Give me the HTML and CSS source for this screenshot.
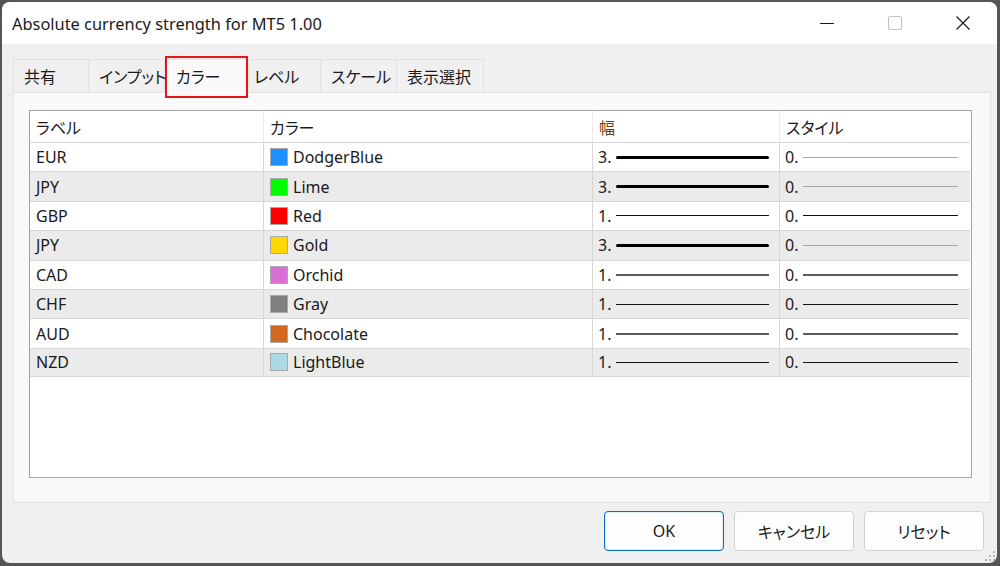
FILE: index.html
```html
<!DOCTYPE html>
<html lang="ja">

<head>
    <meta charset="UTF-8">
    <title>Absolute currency strength for MT5 1.00</title>
    <link rel="stylesheet" href="styles.css">
</head>

<body>
    <div class="window">
        <div class="titlebar">
            <div class="title">Absolute currency strength for MT5 1.00</div>
            <div class="controls">
                <span class="ctl">
                    <svg width="16" height="16" viewBox="0 0 16 16"><path d="M1 8.5h14" stroke="#1a1a1a" stroke-width="1.1"/></svg>
                </span>
                <span class="ctl">
                    <svg width="16" height="16" viewBox="0 0 16 16"><rect x="1.5" y="1.5" width="13" height="13" rx="2" fill="none" stroke="#c4c4c4" stroke-width="1.1"/></svg>
                </span>
                <span class="ctl">
                    <svg width="16" height="16" viewBox="0 0 16 16"><path d="M1.5 1.5l13 13M14.5 1.5l-13 13" stroke="#1a1a1a" stroke-width="1.2"/></svg>
                </span>
            </div>
        </div>

        <div class="content">
            <div class="tabs">
                <div class="tab t-share">共有</div>
                <div class="tab t-input">インプット</div>
                <div class="tab t-color active">カラー</div>
                <div class="tab t-level">レベル</div>
                <div class="tab t-scale">スケール</div>
                <div class="tab t-show">表示選択</div>
            </div>

            <div class="panel">
                <div class="list">
                    <div class="row head">
                        <div class="cell">ラベル</div>
                        <div class="cell">カラー</div>
                        <div class="cell sorted">幅</div>
                        <div class="cell">スタイル</div>
                    </div>
                    <div class="row">
                        <div class="cell">EUR</div>
                        <div class="cell"><span class="swatch" style="background:#1e90ff"></span>DodgerBlue</div>
                        <div class="cell wcell">3.<span class="stroke thick"></span></div>
                        <div class="cell scell">0.<span class="stroke light"></span></div>
                    </div>
                    <div class="row alt">
                        <div class="cell">JPY</div>
                        <div class="cell"><span class="swatch" style="background:#00ff00"></span>Lime</div>
                        <div class="cell wcell">3.<span class="stroke thick"></span></div>
                        <div class="cell scell">0.<span class="stroke light"></span></div>
                    </div>
                    <div class="row">
                        <div class="cell">GBP</div>
                        <div class="cell"><span class="swatch" style="background:#ff0000"></span>Red</div>
                        <div class="cell wcell">1.<span class="stroke thin"></span></div>
                        <div class="cell scell">0.<span class="stroke thin"></span></div>
                    </div>
                    <div class="row alt">
                        <div class="cell">JPY</div>
                        <div class="cell"><span class="swatch" style="background:#ffd700"></span>Gold</div>
                        <div class="cell wcell">3.<span class="stroke thick"></span></div>
                        <div class="cell scell">0.<span class="stroke light"></span></div>
                    </div>
                    <div class="row">
                        <div class="cell">CAD</div>
                        <div class="cell"><span class="swatch" style="background:#da70d6"></span>Orchid</div>
                        <div class="cell wcell">1.<span class="stroke grey"></span></div>
                        <div class="cell scell">0.<span class="stroke grey"></span></div>
                    </div>
                    <div class="row alt">
                        <div class="cell">CHF</div>
                        <div class="cell"><span class="swatch" style="background:#808080"></span>Gray</div>
                        <div class="cell wcell">1.<span class="stroke thin"></span></div>
                        <div class="cell scell">0.<span class="stroke thin"></span></div>
                    </div>
                    <div class="row">
                        <div class="cell">AUD</div>
                        <div class="cell"><span class="swatch" style="background:#d2691e"></span>Chocolate</div>
                        <div class="cell wcell">1.<span class="stroke grey"></span></div>
                        <div class="cell scell">0.<span class="stroke grey"></span></div>
                    </div>
                    <div class="row alt last">
                        <div class="cell">NZD</div>
                        <div class="cell"><span class="swatch" style="background:#add8e6"></span>LightBlue</div>
                        <div class="cell wcell">1.<span class="stroke thin"></span></div>
                        <div class="cell scell">0.<span class="stroke thin"></span></div>
                    </div>
                </div>
            </div>

            <div class="buttons">
                <button class="btn primary">OK</button>
                <button class="btn">キャンセル</button>
                <button class="btn">リセット</button>
            </div>
        </div>

        <svg class="grip" width="12" height="12" viewBox="0 0 12 12">
            <rect x="9" y="1" width="2" height="2" fill="#b5b5b5"/>
            <rect x="5" y="5" width="2" height="2" fill="#b5b5b5"/>
            <rect x="9" y="5" width="2" height="2" fill="#b5b5b5"/>
            <rect x="1" y="9" width="2" height="2" fill="#b5b5b5"/>
            <rect x="5" y="9" width="2" height="2" fill="#b5b5b5"/>
            <rect x="9" y="9" width="2" height="2" fill="#b5b5b5"/>
        </svg>
    </div>
</body>

</html>
```

FILE: styles.css
```css
* {
    box-sizing: border-box;
}

body {
    margin: 0;
    padding: 2px 3px 3px 2px;
    background: #555555;
    font-family: 'Noto Sans', 'Noto Sans CJK JP', sans-serif;
    font-size: 16px;
    color: #1a1a1a;
    height: 566px;
    overflow: hidden;
}

.window {
    position: relative;
    height: 561px;
    background: #f0f0f0;
    border-radius: 8px;
    overflow: hidden;
    display: flex;
    flex-direction: column;
}

/* title bar */
.titlebar {
    height: 42px;
    background: #ffffff;
    display: flex;
    align-items: center;
    justify-content: space-between;
}

.title {
    padding-left: 10px;
    font-size: 16.4px;
    color: #1a1a1a;
}

.controls {
    display: flex;
    height: 100%;
}

.ctl {
    width: 68px;
    display: flex;
    align-items: center;
    justify-content: center;
}

/* body */
.content {
    flex: 1;
    display: flex;
    flex-direction: column;
    padding: 15px 6px 12px 11px;
}

.tabs {
    display: flex;
    height: 33px;
}

.tab {
    height: 33px;
    line-height: 32px;
    padding-left: 10px;
    background: #f0f0f0;
    border: 1px solid #e2e2e2;
    border-left: none;
    border-bottom: none;
    white-space: nowrap;
    font-family: 'Noto Sans CJK JP', sans-serif;
    font-feature-settings: "palt";
}

.t-share {
    width: 76px;
    border-left: 1px solid #e2e2e2;
}

.t-input {
    width: 76px;
}

.t-color {
    width: 84px;
    padding-left: 11px;
}

.t-level {
    width: 72px;
    padding-left: 5px;
}

.t-scale {
    width: 76px;
}

.t-show {
    width: 87px;
}

.tab.active {
    position: relative;
    background: #f9f9f9;
    border-color: #e2e2e2;
    z-index: 1;
    height: 34px;
}

.tab.active::after {
    content: "";
    position: absolute;
    left: 0;
    right: 0;
    top: -4px;
    bottom: -5px;
    border: 2px solid #e8141b;
}

.panel {
    height: 411px;
    background: #f9f9f9;
    border: 1px solid #e2e2e2;
    padding: 17px 18px 24px 15px;
}

/* list view */
.list {
    height: 100%;
    background: #ffffff;
    border: 1px solid #a3a3a3;
}

.row {
    display: grid;
    grid-template-columns: 234px 329px 187px 1fr;
    height: 29.4px;
    border-top: 1px solid #d6d6d6;
    margin-right: 1px;
}

.row.alt {
    background: #ebebeb;
}

.row.last {
    border-bottom: 1px solid #d6d6d6;
}

.row.head {
    height: 31px;
    border-top: none;
    background: #ffffff;
}

.cell {
    display: flex;
    align-items: center;
    padding-left: 6px;
    border-right: 1px solid #d6d6d6;
    white-space: nowrap;
    font-family: 'Noto Sans', 'Noto Sans CJK JP', sans-serif;
}

.cell:last-child {
    border-right: none;
}

.head .cell {
    border-right-color: #ececec;
    font-family: 'Noto Sans CJK JP', sans-serif;
    font-feature-settings: "palt";
}

.head .cell.sorted {
    color: #6a4312;
}

.swatch {
    width: 18px;
    height: 18px;
    border: 1px solid #a8a8a8;
    margin-right: 5px;
    flex: none;
}

.wcell {
    padding: 0 10px 0 5px;
}

.scell {
    padding: 0 12px 0 5px;
}

.stroke {
    flex: 1;
    margin-left: 5px;
    height: 1px;
    background: #111111;
}

.stroke.thick {
    height: 3px;
    border-radius: 2px;
    background: #000000;
}

.stroke.light {
    background: #a6a6a6;
}

.stroke.grey {
    height: 2px;
    background: #5c5c5c;
}

/* buttons */
.buttons {
    display: flex;
    justify-content: flex-end;
    gap: 10px;
    margin-top: 8px;
    margin-right: 7px;
}

.btn {
    width: 120px;
    height: 40px;
    background: #fdfdfd;
    border: 1px solid #d3d3d3;
    border-radius: 4px;
    font-family: 'Noto Sans', 'Noto Sans CJK JP', sans-serif;
    font-feature-settings: "palt";
    font-size: 16px;
    color: #1a1a1a;
}

.btn.primary {
    border: 1px solid #0a6bc4;
    box-shadow: inset 0 0 0 1px #e4eef8;
}

.grip {
    position: absolute;
    right: 1px;
    bottom: 1px;
}
```
